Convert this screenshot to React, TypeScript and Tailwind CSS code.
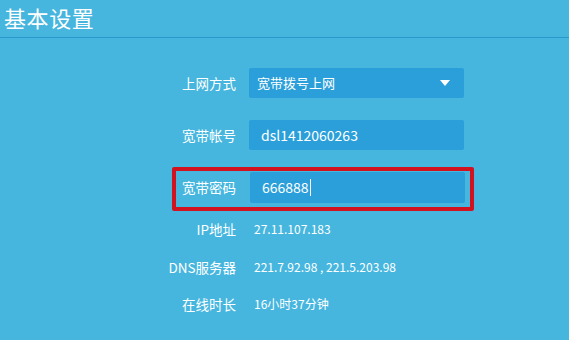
import React from "react";

const font = { fontFamily: '"Microsoft YaHei", "Noto Sans CJK SC", "Noto Sans", sans-serif' };

export default function App() {
  return (
    <div
      className="w-[569px] h-[340px] overflow-hidden bg-[#46b6de] text-white flex flex-col"
      style={font}
    >
      <div className="h-[38px] border-b border-[#2a98cc] pl-[4px] pt-[2px]">
        <div className="text-[22px] leading-[30px] tracking-[0.6px]">基本设置</div>
      </div>

      {/* 上网方式 */}
      <div className="mt-[30px] flex items-center pl-[173px]">
        <div className="w-[63px] text-right text-[13.5px]">上网方式</div>
        <div className="ml-[13px] w-[215px] h-[30px] bg-[#2a9fd9] rounded-[2px] flex items-center justify-between pl-[8px] pr-[14px]">
          <span className="text-[13px]">宽带拨号上网</span>
          <svg width="10" height="6" viewBox="0 0 10 6">
            <path d="M0 0 L10 0 L5 6 Z" fill="#ffffff" />
          </svg>
        </div>
      </div>

      {/* 宽带帐号 */}
      <div className="mt-[22px] flex items-center pl-[173px]">
        <div className="w-[63px] text-right text-[13.5px]">宽带帐号</div>
        <div className="ml-[13px] w-[215px] h-[30px] bg-[#2a9fd9] rounded-[2px] flex items-center pl-[12px]">
          <span className="text-[14px]">dsl1412060263</span>
        </div>
      </div>

      {/* 宽带密码 with red highlight */}
      <div className="mt-[17px] ml-[172px] w-[302px] h-[44px] border-[4px] border-[#d2121e] rounded-[2px] flex items-start pt-[1px]">
        <div className="w-[60px] h-[31px] flex items-center justify-end text-[13.5px]">宽带密码</div>
        <div className="ml-[14px] w-[215px] h-[31px] bg-[#2a9fd9] rounded-[2px] flex items-center pl-[12px]">
          <span className="text-[14px]">666888</span>
          <span className="ml-[1px] w-[1px] h-[17px] bg-white" />
        </div>
      </div>

      {/* Info rows */}
      <div className="mt-[8px] flex items-center pl-[150px] h-[20px]">
        <div className="w-[86px] text-right text-[13.5px]">IP地址</div>
        <div className="ml-[18px] text-[12px]">27.11.107.183</div>
      </div>
      <div className="mt-[18px] flex items-center pl-[150px] h-[20px]">
        <div className="w-[86px] text-right text-[13.5px]">DNS服务器</div>
        <div className="ml-[18px] text-[12px]">221.7.92.98 , 221.5.203.98</div>
      </div>
      <div className="mt-[17px] flex items-center pl-[150px] h-[20px]">
        <div className="w-[86px] text-right text-[13.5px]">在线时长</div>
        <div className="ml-[18px] text-[12px]">16小时37分钟</div>
      </div>
    </div>
  );
}
